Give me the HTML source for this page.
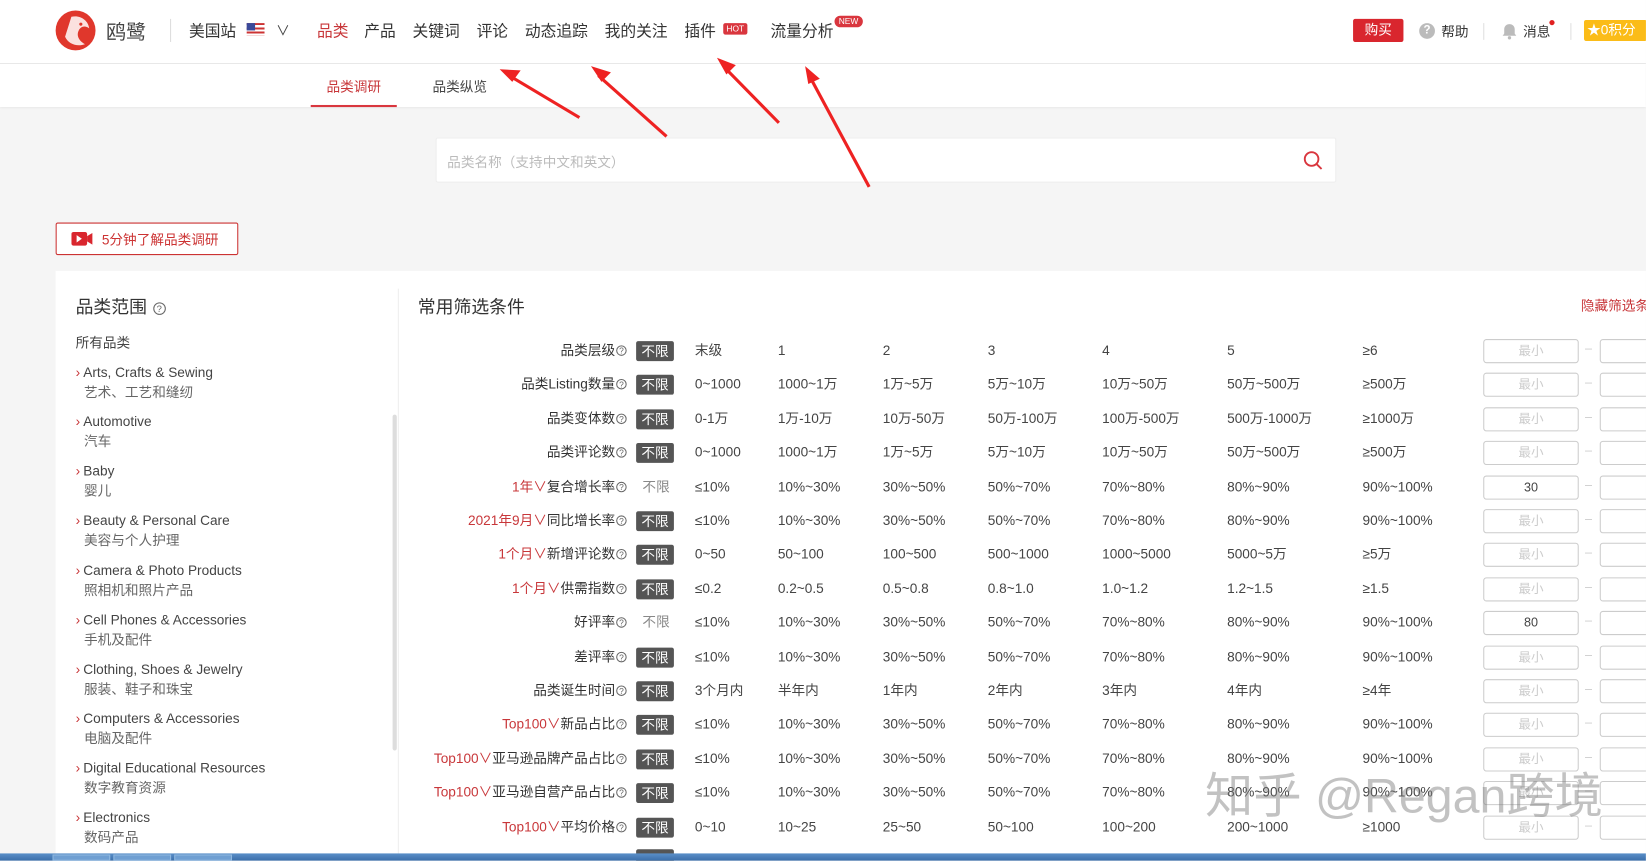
<!DOCTYPE html>
<html><head><meta charset="utf-8">
<style>
*{margin:0;padding:0;box-sizing:border-box}
html,body{width:1646px;height:861px;overflow:hidden;background:#f5f5f5}
#w{position:absolute;left:0;top:0;width:1568px;height:820px;transform:scale(1.0497);transform-origin:0 0;font-family:"Liberation Sans","Noto Sans CJK SC",sans-serif;color:#333;background:#f5f5f5;overflow:hidden}
.a{position:absolute;white-space:nowrap}
.hdr{position:absolute;left:0;top:0;width:1568px;height:61px;background:#fff;border-bottom:1px solid #e8e8e8}
.sub{position:absolute;left:0;top:61px;width:1568px;height:41px;background:#fff;box-shadow:0 1px 2px rgba(0,0,0,.08)}
.nav{font-size:15px;color:#333;top:19px}
.red{color:#c8373a}
.panel{position:absolute;left:53px;top:258px;width:1520px;height:560px;background:#fff}
.lab{font-size:13px;color:#333;text-align:right;width:300px;line-height:18px;height:18px}
.q{display:inline-block;width:10px;height:10px;border:1px solid #666;border-radius:50%;font-size:8px;line-height:9px;text-align:center;color:#666;vertical-align:1px;margin-left:1px}
.bx{position:absolute;left:606px;width:36px;height:19px;background:#555;color:#fff;font-size:13px;text-align:center;line-height:19px;border-radius:2px}
.v{font-size:13px;color:#444;line-height:18px;height:18px}
.in{position:absolute;width:91px;height:23px;border:1px solid #ccc;border-radius:3px;background:#fff;font-size:12px;color:#ccc;text-align:center;line-height:21px}
.in2{position:absolute;left:1524px;width:60px;height:23px;border:1px solid #ccc;border-radius:3px;background:#fff}
.cat{font-size:13px;color:#444;left:72px;line-height:18px}
.cat .c{color:#666;margin-left:8px;display:block;margin-top:1px}
.ch{color:#c8373a;margin-right:3px}
</style></head><body><div id="w">
<div class="hdr"></div>
<svg class="a" style="left:52px;top:8px" width="42" height="42" viewBox="0 0 42 42"><circle cx="20" cy="21" r="19" fill="#e0372c"/><path d="M16 8c8-2 16 3 17 11-4-3-8-2-10 2-3 6 2 11 6 13-7 3-16 0-19-7" fill="#fff" opacity=".85"/><circle cx="25" cy="15" r="1.5" fill="#e0372c"/></svg>
<div class="a" style="left:101px;top:16px;font-size:19px;color:#444">鸥鹭</div>
<div class="a" style="left:162px;top:18px;width:1px;height:22px;background:#ddd"></div>
<div class="a nav" style="left:180px">美国站</div>
<div class="a" style="left:235px;top:22px;width:17px;height:12px;background:repeating-linear-gradient(#c33 0 2px,#fff 2px 4px)"><div style="width:8px;height:7px;background:#3a4a9a"></div></div>
<div class="a" style="left:263px;top:19px;font-size:13px;color:#444">∨</div>
<div class="a nav red" style="left:302px">品类</div>
<div class="a nav" style="left:347px">产品</div>
<div class="a nav" style="left:393px">关键词</div>
<div class="a nav" style="left:454px">评论</div>
<div class="a nav" style="left:500px">动态追踪</div>
<div class="a nav" style="left:576px">我的关注</div>
<div class="a nav" style="left:652px">插件</div>
<div class="a" style="left:689px;top:22px;background:#d9363e;color:#fff;font-size:8px;padding:1px 3px;border-radius:2px">HOT</div>
<div class="a nav" style="left:734px">流量分析</div>
<div class="a" style="left:795px;top:15px;background:#d9363e;color:#fff;font-size:8px;padding:1px 4px;border-radius:7px">NEW</div>
<div class="a" style="left:1289px;top:18px;width:48px;height:22px;background:#d9262e;color:#fff;font-size:13px;text-align:center;line-height:22px;border-radius:2px">购买</div>
<div class="a" style="left:1352px;top:22px;width:15px;height:15px;border-radius:50%;background:#bbb;color:#fff;font-size:11px;text-align:center;line-height:15px;font-weight:bold">?</div>
<div class="a" style="left:1373px;top:20px;font-size:13px">帮助</div>
<div class="a" style="left:1413px;top:22px;width:1px;height:16px;background:#e0e0e0"></div>
<svg class="a" style="left:1431px;top:22px" width="14" height="16" viewBox="0 0 14 16"><path d="M7 1c3 0 5 2 5 5v4l1.5 2h-13L2 10V6c0-3 2-5 5-5z" fill="#bbb"/><circle cx="7" cy="14" r="1.6" fill="#bbb"/></svg>
<div class="a" style="left:1451px;top:20px;font-size:13px">消息</div>
<div class="a" style="left:1476px;top:19px;width:5px;height:5px;border-radius:50%;background:#e02020"></div>
<div class="a" style="left:1496px;top:22px;width:1px;height:16px;background:#e0e0e0"></div>
<div class="a" style="left:1509px;top:19px;width:60px;height:20px;background:#fbbc18;color:#fff;font-size:13px;line-height:20px;padding-left:3px;border-radius:2px">★0积分</div>

<div class="sub"></div>
<div class="a red" style="left:311px;top:72px;font-size:13px">品类调研</div>
<div class="a" style="left:296px;top:100px;width:82px;height:2px;background:#d9363e"></div>
<div class="a" style="left:412px;top:72px;font-size:13px;color:#444">品类纵览</div>

<div class="a" style="left:415px;top:131px;width:858px;height:43px;background:#fff;border:1px solid #eee;border-radius:2px"></div>
<div class="a" style="left:426px;top:144px;font-size:13px;color:#bbb">品类名称（支持中文和英文）</div>
<svg class="a" style="left:1241px;top:143px" width="20" height="20" viewBox="0 0 20 20"><circle cx="8.5" cy="8.5" r="6.5" fill="none" stroke="#d9363e" stroke-width="1.8"/><path d="M13.5 13.5l4.5 4.5" stroke="#d9363e" stroke-width="1.8"/></svg>

<div class="a" style="left:53px;top:212px;width:174px;height:31px;border:1px solid #c33;border-radius:2px;background:#fff"></div>
<svg class="a" style="left:68px;top:220px" width="21" height="15" viewBox="0 0 21 15"><rect x="0" y="1" width="15" height="13" rx="2" fill="#d9262e"/><path d="M15 5l5-3v11l-5-3z" fill="#d9262e"/><path d="M5 4l5 3.5L5 11z" fill="#fff"/></svg>
<div class="a" style="left:97px;top:218px;font-size:13px;color:#c33">5分钟了解品类调研</div>

<div class="panel"></div>
<div class="a" style="left:379px;top:275px;width:1px;height:545px;background:#eee"></div>
<div class="a" style="left:374px;top:395px;width:4px;height:320px;background:#ddd;border-radius:2px"></div>
<div class="a" style="left:72px;top:278px;font-size:17px;color:#333">品类范围 <span class="q" style="width:12px;height:12px;font-size:9px;line-height:11px">?</span></div>
<div class="a" style="left:398px;top:278px;font-size:17px;color:#333">常用筛选条件</div>
<div class="a red" style="left:1506px;top:281px;font-size:13px">隐藏筛选条件</div>
<div class="a cat" style="top:318px">所有品类</div>
<div class="a cat" style="top:346px"><span class="ch">›</span>Arts, Crafts &amp; Sewing<span class="c">艺术、工艺和缝纫</span></div>
<div class="a cat" style="top:393px"><span class="ch">›</span>Automotive<span class="c">汽车</span></div>
<div class="a cat" style="top:440px"><span class="ch">›</span>Baby<span class="c">婴儿</span></div>
<div class="a cat red" style="top:487px"><span class="ch">›</span>Beauty &amp; Personal Care<span class="c red">美容与个人护理</span></div>
<div class="a cat" style="top:535px"><span class="ch">›</span>Camera &amp; Photo Products<span class="c">照相机和照片产品</span></div>
<div class="a cat" style="top:582px"><span class="ch">›</span>Cell Phones &amp; Accessories<span class="c">手机及配件</span></div>
<div class="a cat" style="top:629px"><span class="ch">›</span>Clothing, Shoes &amp; Jewelry<span class="c">服装、鞋子和珠宝</span></div>
<div class="a cat" style="top:676px"><span class="ch">›</span>Computers &amp; Accessories<span class="c">电脑及配件</span></div>
<div class="a cat" style="top:723px"><span class="ch">›</span>Digital Educational Resources<span class="c">数字教育资源</span></div>
<div class="a cat" style="top:770px"><span class="ch">›</span>Electronics<span class="c">数码产品</span></div>

<div id="rows"></div>
<script>
var rows=[
["","品类层级",1,"末级","1","2","3","4","5","≥6",""],
["","品类Listing数量",1,"0~1000","1000~1万","1万~5万","5万~10万","10万~50万","50万~500万","≥500万",""],
["","品类变体数",1,"0-1万","1万-10万","10万-50万","50万-100万","100万-500万","500万-1000万","≥1000万",""],
["","品类评论数",1,"0~1000","1000~1万","1万~5万","5万~10万","10万~50万","50万~500万","≥500万",""],
["1年","复合增长率",0,"≤10%","10%~30%","30%~50%","50%~70%","70%~80%","80%~90%","90%~100%","30"],
["2021年9月","同比增长率",1,"≤10%","10%~30%","30%~50%","50%~70%","70%~80%","80%~90%","90%~100%",""],
["1个月","新增评论数",1,"0~50","50~100","100~500","500~1000","1000~5000","5000~5万","≥5万",""],
["1个月","供需指数",1,"≤0.2","0.2~0.5","0.5~0.8","0.8~1.0","1.0~1.2","1.2~1.5","≥1.5",""],
["","好评率",0,"≤10%","10%~30%","30%~50%","50%~70%","70%~80%","80%~90%","90%~100%","80"],
["","差评率",1,"≤10%","10%~30%","30%~50%","50%~70%","70%~80%","80%~90%","90%~100%",""],
["","品类诞生时间",1,"3个月内","半年内","1年内","2年内","3年内","4年内","≥4年",""],
["Top100","新品占比",1,"≤10%","10%~30%","30%~50%","50%~70%","70%~80%","80%~90%","90%~100%",""],
["Top100","亚马逊品牌产品占比",1,"≤10%","10%~30%","30%~50%","50%~70%","70%~80%","80%~90%","90%~100%",""],
["Top100","亚马逊自营产品占比",1,"≤10%","10%~30%","30%~50%","50%~70%","70%~80%","80%~90%","90%~100%",""],
["Top100","平均价格",1,"0~10","10~25","25~50","50~100","100~200","200~1000","≥1000",""]];
var xs=[662,741,841,941,1050,1169,1298],h="";
rows.forEach(function(r,i){var y=325+i*32.4;
h+='<div class="a lab" style="left:297px;top:'+y+'px">'+(r[0]?'<span class="red">'+r[0]+'∨</span>':'')+r[1]+'<span class="q">?</span></div>';
if(r[2])h+='<div class="bx" style="top:'+y+'px">不限</div>';else h+='<div class="a v" style="left:612px;top:'+y+'px;color:#888">不限</div>';
for(var k=0;k<7;k++)h+='<div class="a v" style="left:'+xs[k]+'px;top:'+y+'px">'+r[3+k]+'</div>';
h+='<div class="in" style="left:1413px;top:'+(y-2)+'px;'+(r[10]?'color:#444':'')+'">'+(r[10]||'最小')+'</div>';
h+='<div class="a" style="left:1510px;top:'+y+'px;color:#ccc;font-size:12px">–</div>';
h+='<div class="in2" style="top:'+(y-2)+'px"></div>';});
document.getElementById('rows').innerHTML=h;
</script>
<div class="bx" style="top:809px"></div>

<div class="a" style="left:1148px;top:722px;font-size:46px;color:rgba(120,120,120,.45)">知乎 @Regan跨境</div>

<svg class="a" style="left:0;top:0" width="1568" height="820">
<g stroke="#ee2222" stroke-width="3" fill="#ee2222">
<line x1="485" y1="72" x2="552" y2="112"/><path d="M476 66l20 1-8 11z" stroke="none"/>
<line x1="570" y1="72" x2="635" y2="130"/><path d="M563 63l19 6-9 9z" stroke="none"/>
<line x1="690" y1="64" x2="742" y2="117"/><path d="M683 55l18 7-9 9z" stroke="none"/>
<line x1="772" y1="74" x2="828" y2="178"/><path d="M767 63l14 12-11 5z" stroke="none"/>
</g></svg>

<div class="a" style="left:0;top:813px;width:1568px;height:7px;background:linear-gradient(#5a8fc8,#3b6eaa)"></div>
<div class="a" style="left:50px;top:814px;width:55px;height:6px;background:#6f9fd2;border:1px solid #8fb8e0"></div>
<div class="a" style="left:108px;top:814px;width:55px;height:6px;background:#6f9fd2;border:1px solid #8fb8e0"></div>
<div class="a" style="left:166px;top:814px;width:55px;height:6px;background:#6f9fd2;border:1px solid #8fb8e0"></div>
</div></body></html>
